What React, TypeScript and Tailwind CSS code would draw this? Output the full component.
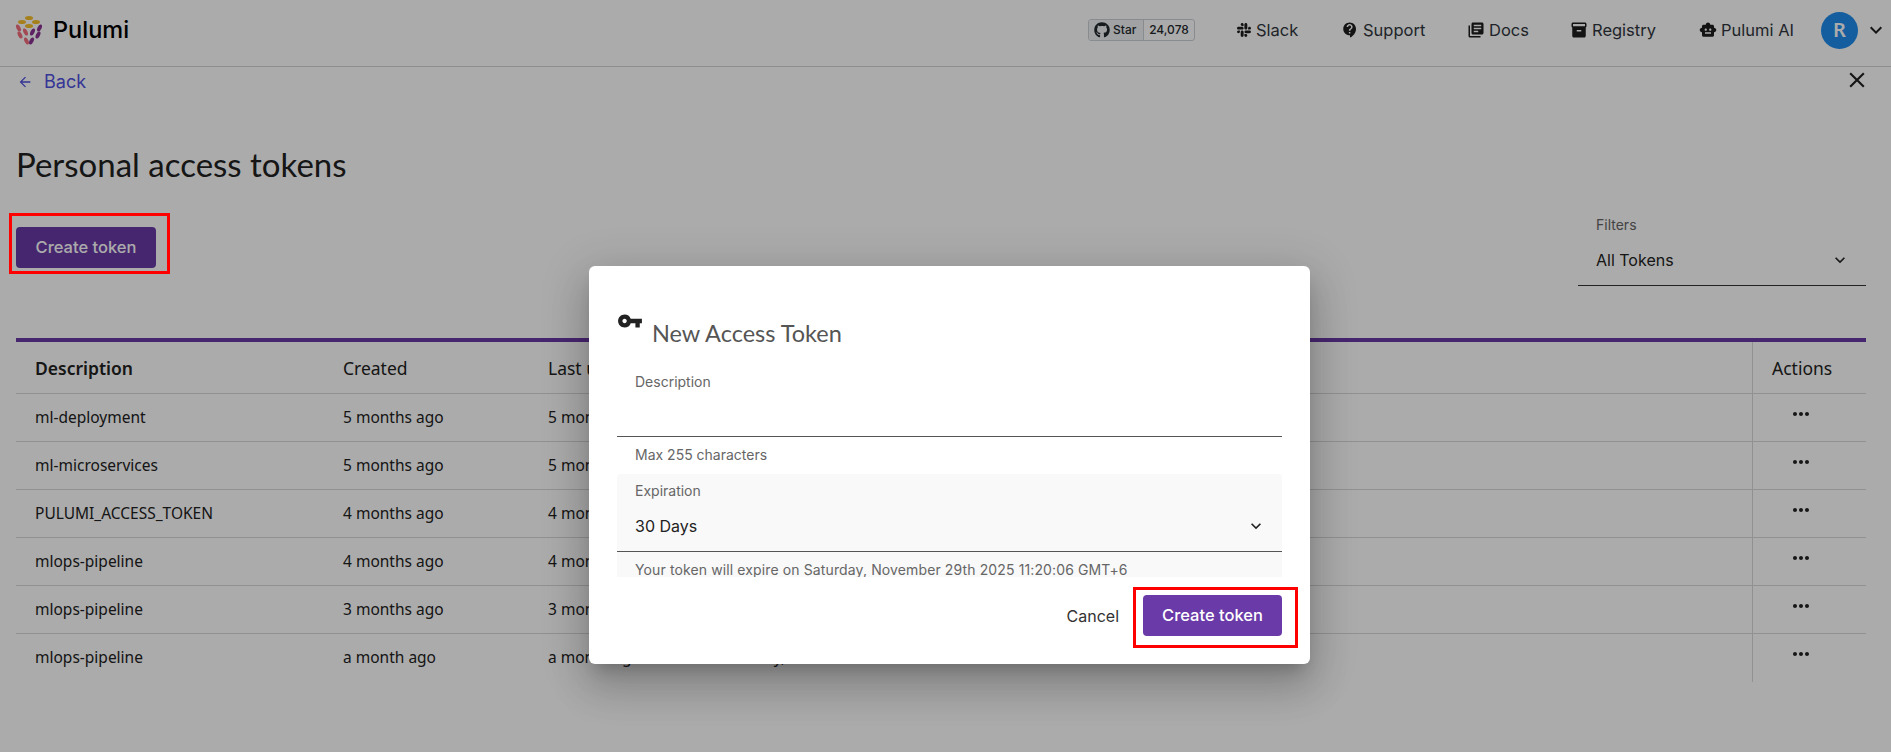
import { FaGithub, FaSlack } from "react-icons/fa";
import {
  MdArrowBack,
  MdClose,
  MdContactSupport,
  MdExpandMore,
  MdInventory2,
  MdLibraryBooks,
  MdMoreHoriz,
  MdSmartToy,
  MdVpnKey,
} from "react-icons/md";

const ROWS = [
  { name: "ml-deployment", created: "5 months ago", expires: "Tuesday, May 5th 2026" },
  { name: "ml-microservices", created: "5 months ago", expires: "Tuesday, May 5th 2026" },
  { name: "PULUMI_ACCESS_TOKEN", created: "4 months ago", expires: "Friday, June 5th 2026" },
  { name: "mlops-pipeline", created: "4 months ago", expires: "Friday, June 5th 2026" },
  { name: "mlops-pipeline", created: "3 months ago", expires: "Sunday, July 5th 2026" },
  { name: "mlops-pipeline", created: "a month ago", expires: "Saturday, November 14th 2026" },
];

const NAV = [
  { label: "Slack", icon: <FaSlack className="h-[16px] w-[16px]" />, width: "w-[105px]" },
  { label: "Support", icon: <MdContactSupport className="h-[18px] w-[18px]" />, width: "w-[126px]" },
  { label: "Docs", icon: <MdLibraryBooks className="h-[18px] w-[18px]" />, width: "w-[103px]" },
  { label: "Registry", icon: <MdInventory2 className="h-[18px] w-[18px]" />, width: "w-[129px]" },
  { label: "Pulumi AI", icon: <MdSmartToy className="h-[18px] w-[18px]" />, width: "w-[121px]" },
];

function PulumiLogo() {
  const gold = [[13, 3], [6, 7], [20, 7], [13, 11]];
  const pink = [[2.5, 13], [4, 20], [9.5, 17], [10.5, 26]];
  const purple = [[23.5, 13], [22, 20], [16.5, 17], [15.5, 26]];
  return (
    <svg viewBox="0 0 26 30" className="h-[30px] w-[26px]">
      {gold.map(([x, y]) => (
        <ellipse key={`${x}-${y}`} cx={x} cy={y} rx="4" ry="2" fill="#f7bf2a" />
      ))}
      {pink.map(([x, y]) => (
        <ellipse key={`${x}-${y}`} cx={x} cy={y} rx="2" ry="3.8" fill="#f26e7e" transform={`rotate(-25 ${x} ${y})`} />
      ))}
      {purple.map(([x, y]) => (
        <ellipse key={`${x}-${y}`} cx={x} cy={y} rx="2" ry="3.8" fill="#8a3391" transform={`rotate(25 ${x} ${y})`} />
      ))}
    </svg>
  );
}

function Header() {
  return (
    <header className="flex h-[67px] items-center border-b border-[#d4d4d4] pb-[6px] pl-4 pr-[3px] font-['Inter',sans-serif]">
      <div className="flex items-center gap-[11px]">
        <PulumiLogo />
        <span className="text-[23.5px] font-medium leading-none text-black">Pulumi</span>
      </div>
      <div className="ml-auto flex items-center">
        <div className="mr-[41px] flex h-[22px] w-[107px] overflow-hidden rounded-[3px] border border-[#ccd1d6] text-[12px] font-medium text-[#24292e]">
          <span className="flex w-[55px] items-center gap-[3px] border-r border-[#ccd1d6] bg-[#eff2f5] pl-[5px]">
            <FaGithub className="h-[16px] w-[16px]" />
            Star
          </span>
          <span className="flex flex-1 items-center justify-center">24,078</span>
        </div>
        {NAV.map((item) => (
          <div key={item.label} className={`flex items-center gap-[4px] text-[16.5px] text-[#30363d] ${item.width}`}>
            <span className="text-[#1d1d1f]">{item.icon}</span>
            {item.label}
          </div>
        ))}
        <div className="ml-[1px] flex h-[37px] w-[37px] items-center justify-center rounded-full bg-[#1f8ded] font-['Noto_Sans',sans-serif] text-[20px] font-semibold text-white">
          R
        </div>
        <MdExpandMore className="ml-[6px] h-[24px] w-[24px] text-[#222]" />
      </div>
    </header>
  );
}

function TokenTable() {
  return (
    <div className="ml-4 mt-[52px] w-[1850px] border-t-4 border-[#6a3aa8] font-['Noto_Sans',sans-serif] text-[#222]">
      <div className="flex h-[52px] items-center border-b border-[#d8d8d8] text-[17.5px]">
        <span className="w-[326px] pl-[19px] pt-[2px] font-semibold">Description</span>
        <span className="w-[206px] pl-[1px] pt-[2px]">Created</span>
        <span className="w-[169px] pt-[2px]">Last used</span>
        <span className="flex-1 pt-[2px]">Expires</span>
        <span className="flex h-full w-[114px] items-center border-l border-[#d8d8d8] pl-[19px] pt-[2px]">Actions</span>
      </div>
      {ROWS.map((row, i) => (
        <div key={i} className={`flex h-[48px] items-center text-[15.5px] ${i < ROWS.length - 1 ? "border-b border-[#d8d8d8]" : ""}`}>
          <span className="w-[326px] pl-[19px]">{row.name}</span>
          <span className="w-[206px] pl-[1px]">{row.created}</span>
          <span className="w-[169px]">{row.created}</span>
          <span className="flex-1">{row.expires}</span>
          <span className="flex h-full w-[114px] items-start border-l border-[#d8d8d8] pl-[36px] pt-[8px]">
            <MdMoreHoriz className="h-[24px] w-[24px]" />
          </span>
        </div>
      ))}
    </div>
  );
}

function Page() {
  return (
    <div className="h-[752px] w-[1891px] overflow-hidden bg-white">
      <Header />
      <div className="relative flex h-[29px] items-center pl-[17px] font-['Inter',sans-serif] text-[18px] text-[#4f4fe0]">
        <MdArrowBack className="mr-[11px] h-[16px] w-[16px]" />
        Back
        <MdClose className="absolute right-[21px] top-[0px] h-[26px] w-[26px] text-[#222]" />
      </div>
      <h1 className="ml-4 mt-[48px] font-['Lato',sans-serif] text-[33px] leading-[40px] text-[#222]">Personal access tokens</h1>
      <div className="mt-[31px] flex items-start justify-between pl-4 pr-[25px]">
        <button className="mt-[12px] h-[41px] w-[140px] rounded-[4px] bg-[#6a3aa8] font-['Inter',sans-serif] text-[16.5px] font-medium text-white">
          Create token
        </button>
        <div className="w-[288px] border-b border-[#333] pb-[10px] font-['Inter',sans-serif]">
          <div className="pl-[18px] text-[14px] leading-[20px] text-[#666]">Filters</div>
          <div className="mt-[10px] flex h-[30px] items-center justify-between pl-[18px] pr-[16px] text-[16px] text-[#222]">
            All Tokens
            <MdExpandMore className="h-[20px] w-[20px]" />
          </div>
        </div>
      </div>
      <TokenTable />
    </div>
  );
}

function Modal() {
  return (
    <div className="absolute left-[589px] top-[266px] flex h-[398px] w-[721px] flex-col rounded-[6px] bg-white px-[28px] font-['Inter',sans-serif] shadow-[0_11px_15px_-7px_rgba(0,0,0,0.2),0_24px_38px_3px_rgba(0,0,0,0.14),0_9px_46px_8px_rgba(0,0,0,0.12)]">
      <div className="mt-[42px] flex items-start">
        <MdVpnKey className="h-[26px] w-[26px] text-[#222]" />
        <span className="ml-[9px] mt-[10px] font-['Lato',sans-serif] text-[23.5px] leading-[30px] text-[#555]">New Access Token</span>
      </div>
      <div className="mt-[24px] h-[65px] border-b border-[#555] pl-[18px] text-[14px] leading-[20px] text-[#666]">Description</div>
      <div className="mt-[8px] pl-[18px] text-[14px] leading-[20px] text-[#666]">Max 255 characters</div>
      <div className="mt-[9px] h-[103px] overflow-hidden rounded-t-[4px] bg-[#f9f9f9]">
        <div className="h-[78px] border-b border-[#555]">
          <div className="pl-[18px] pt-[7px] text-[14px] leading-[20px] text-[#666]">Expiration</div>
          <div className="mt-[10px] flex h-[30px] items-center justify-between pl-[18px] pr-[16px] text-[16px] text-[#222]">
            30 Days
            <MdExpandMore className="h-[20px] w-[20px]" />
          </div>
        </div>
        <div className="mt-[9px] pl-[18px] text-[14px] leading-[18px] tracking-[0.12px] text-[#666]">
          Your token will expire on Saturday, November 29th 2025 11:20:06 GMT+6
        </div>
      </div>
      <div className="mt-[18px] flex items-center justify-end gap-[24px]">
        <span className="text-[16px] text-[#333]">Cancel</span>
        <button className="h-[41px] w-[139px] rounded-[4px] bg-[#6a3aa8] text-[16.5px] font-medium text-white">Create token</button>
      </div>
    </div>
  );
}

export default function App() {
  return (
    <div className="relative h-[752px] w-[1891px] overflow-hidden">
      <Page />
      <div className="absolute inset-0 bg-black/[0.33]" />
      <Modal />
      <div className="absolute left-[9px] top-[213px] h-[61px] w-[161px] border-[3px] border-[#ff0000]" />
      <div className="absolute left-[1133px] top-[587px] h-[61px] w-[165px] border-[3px] border-[#ff0000]" />
    </div>
  );
}
